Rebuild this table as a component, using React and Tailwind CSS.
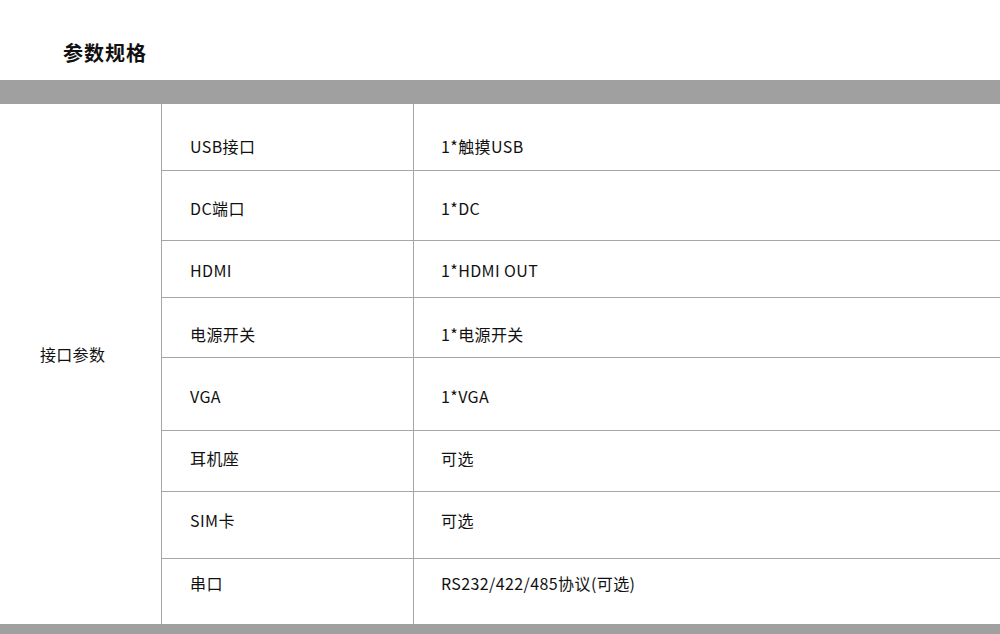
const rows = [
  { name: 'USB接口', value: '1*触摸USB', h: 'h-[67px]', pt: 'pt-[30px]' },
  { name: 'DC端口', value: '1*DC', h: 'h-[70px]', pt: 'pt-[25px]' },
  { name: 'HDMI', value: '1*HDMI OUT', h: 'h-[57px]', pt: 'pt-[17px]' },
  { name: '电源开关', value: '1*电源开关', h: 'h-[60px]', pt: 'pt-[24px]' },
  { name: 'VGA', value: '1*VGA', h: 'h-[73px]', pt: 'pt-[26px]' },
  { name: '耳机座', value: '可选', h: 'h-[61px]', pt: 'pt-[15px]' },
  { name: 'SIM卡', value: '可选', h: 'h-[67px]', pt: 'pt-[16px]' },
  { name: '串口', value: 'RS232/422/485协议(可选)', h: 'h-[65px]', pt: 'pt-[12px]', last: true },
];

export default function App() {
  return (
    <div
      className="w-[1000px] h-[634px] overflow-hidden bg-white text-[#111]"
      style={{ fontFamily: '"Noto Sans CJK SC", "Noto Sans", sans-serif' }}
    >
      <div className="h-[80px] pl-[63px] pt-[39px]">
        <h2 className="text-[20px] leading-[28px] font-bold tracking-[1px]">参数规格</h2>
      </div>
      <div className="h-[24px] bg-[#a0a0a0]" />
      <div className="flex">
        <div className="w-[162px] border-r border-[#a6a6a6] flex items-center pl-[40px] pb-[20px]">
          <span className="text-[16px] leading-[20px] tracking-[0.3px]">接口参数</span>
        </div>
        <div className="flex-1 flex flex-col">
          {rows.map((r) => (
            <div
              key={r.name}
              className={`flex ${r.h} ${r.last ? '' : 'border-b border-[#a6a6a6]'}`}
            >
              <div className={`w-[252px] border-r border-[#a6a6a6] pl-[28px] ${r.pt}`}>
                <span className="text-[16px] leading-[20px] tracking-[0.4px]">{r.name}</span>
              </div>
              <div className={`flex-1 pl-[27px] ${r.pt}`}>
                <span className="text-[16px] leading-[20px] tracking-[0.4px]">{r.value}</span>
              </div>
            </div>
          ))}
        </div>
      </div>
      <div className="h-[10px] bg-[#a0a0a0]" />
    </div>
  );
}
